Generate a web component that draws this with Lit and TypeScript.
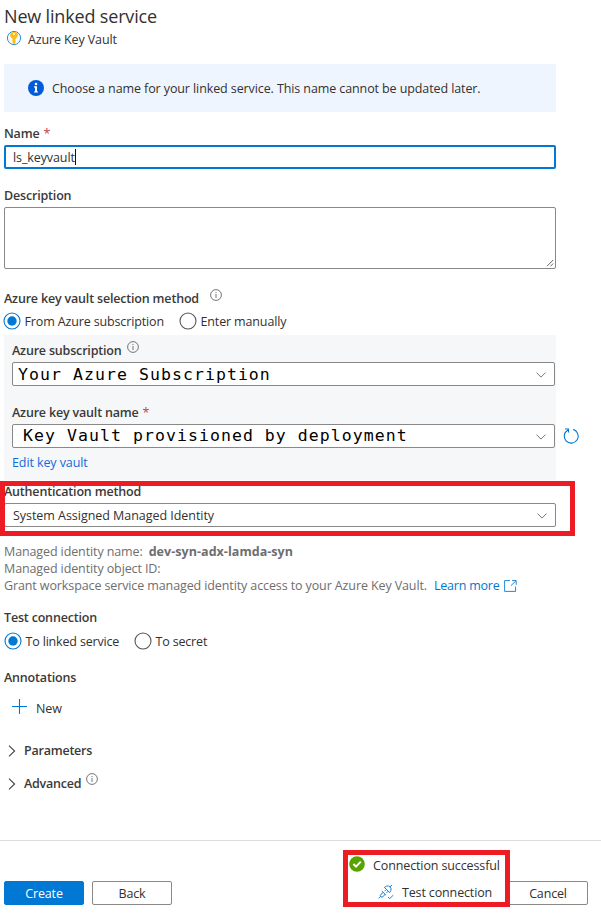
import { LitElement, html, css, svg } from "lit";

const chevronDown = html`<svg class="chev" width="10" height="6" viewBox="0 0 10 6"><path d="M.5 .6 5 5.1 9.5 .6" fill="none" stroke="#777" /></svg>`;
const chevronRight = html`<svg width="8" height="12" viewBox="0 0 8 12"><path d="M1 .6 6.6 6 1 11.4" fill="none" stroke="#444" stroke-width="1.1" /></svg>`;
const info = html`<svg class="info" width="12" height="12" viewBox="0 0 12 12"><circle cx="6" cy="6" r="5.4" fill="none" stroke="#666" stroke-width=".9" /><path d="M6 5v4M6 3v1.1" stroke="#666" stroke-width=".9" /></svg>`;
const radio = (on: boolean) => html`<svg width="18" height="18" viewBox="0 0 18 18">
  <circle cx="9" cy="9" r="8" fill="#fff" stroke=${on ? "#0078d4" : "#555"} stroke-width="1.1" />
  ${on ? svg`<circle cx="9" cy="9" r="4.7" fill="#0078d4" />` : ""}</svg>`;

class AppRoot extends LitElement {
  static styles = css`
    :host { display: block; width: 601px; height: 913px; overflow: hidden; background: #fff; color: #323130;
      font: 400 12.5px/18px "Open Sans", "Noto Sans", sans-serif; letter-spacing: -0.1px; }
    * { box-sizing: border-box; }
    svg { display: block; flex: none; }
    .page { display: flex; flex-direction: column; height: 913px; padding-left: 4px; white-space: nowrap; position: relative; }
    .title { font: 500 18px/26px "Open Sans", sans-serif; letter-spacing: -0.17px; height: 26px; margin-top: 3px; }
    .sub { display: flex; height: 18px; gap: 6px; padding-left: 2px; margin-top: 1px; }
    .sub span { padding-top: 1px; letter-spacing: -0.12px; }
    .banner { display: flex; align-items: center; gap: 8px; width: 552px; height: 48px; margin-top: 16px; padding-left: 24px; background: #eff5ff; }
    .banner span { padding-top: 2px; }
    .label { display: flex; height: 18px; padding-top: 1px; font-weight: 600; letter-spacing: -0.18px; margin-top: 17px; color: #3b3a39; }
    .label .info { margin-top: -1px; }
    .label + div { margin-top: 3px; }
    .req { color: #c4434b; margin-left: 4px; font-weight: 400; }
    .input { display: flex; align-items: center; width: 552px; height: 24px; border: 2px solid #0078d4; border-radius: 2px; padding-left: 7px; }
    .input span:first-child { padding-top: 2px; }
    .caret { width: 1px; height: 16px; background: #111; }
    .area { display: flex; align-items: flex-end; justify-content: flex-end; width: 552px; height: 62px; border: 1px solid #8a8886; border-radius: 2px; padding: 1px; }
    .radios { display: flex; height: 18px; align-items: center; letter-spacing: -0.17px; }
    .radios .txt { height: 18px; padding: 1px 0 0 4px; margin-right: 4px; }
    .radios.vault { margin: 5px 0 0 -1.5px; }
    .radios.vault .txt { width: 154px; letter-spacing: -0.14px; }
    .radios.conn { margin: 6px 0 0 -0.5px; }
    .radios.conn .txt { width: 108px; }
    .panel { display: flex; flex-direction: column; width: 552px; height: 145px; margin-top: 5px; padding: 6px 1px 0 8px; background: #f6f7f9; }
    .panel .label:first-child { margin-top: 0; }
    .select { display: flex; align-items: center; justify-content: space-between; height: 24px; background: #fff; border: 1px solid #8a8886; border-radius: 2px; padding: 0 8px 0 5px; }
    .select.auth { width: 552px; padding-left: 8px; }
    .auth span { padding-top: 2px; letter-spacing: -0.04px; }
    .chev { margin-top: 2px; }
    .mono { font: 16.5px/22px "DejaVu Sans Mono", monospace; letter-spacing: 1.06px; color: #000; }
    .mono.sub1 { padding-top: 2px; }
    .mono.kv { padding-left: 5px; }
    .row { display: flex; width: 568px; gap: 8px; align-items: center; }
    .row .select { width: 543px; flex: none; }
    .link { color: #0f6cdb; }
    .edit { margin-top: 6px; }
    .grey { color: #6e6e6e; height: 17px; line-height: 17px; display: flex; letter-spacing: -0.11px; }
    .grey.first { margin-top: 16px; }
    .grey b { margin-left: 6px; letter-spacing: 0.05px; }
    .grey .link { margin-left: 7px; color: #0078d4; letter-spacing: -0.22px; }
    .grey svg { margin: 3px 0 0 4px; }
    .new { display: flex; gap: 8px; margin: 14px 0 0 8px; height: 18px; }
    .new svg { margin-top: -1px; }
    .exp { display: flex; align-items: center; gap: 8px; height: 18px; padding-left: 4px; font-weight: 600; letter-spacing: -0.22px; color: #3b3a39; }
    .exp .info { margin: -11px 0 0 -3px; }
    .footer { display: flex; width: 601px; height: 73px; margin: auto 0 0 -4px; border-top: 1px solid #dcdcdc; padding: 40px 13px 0 4px; gap: 8px; }
    .btn { width: 80px; height: 24px; border: 1px solid #8a8886; border-radius: 2px; text-align: center; line-height: 23px; letter-spacing: -0.15px; }
    .primary { background: #0078d4; border-color: #0078d4; color: #fff; }
    .cancel { margin-left: auto; }
    .mark { position: absolute; border: 5px solid #ed1c24; }
    .mark-auth { left: 0; top: 481px; width: 575px; height: 55px; }
    .mark-test { left: 343px; top: 850px; width: 167px; height: 57px; background: #fff; }
    .status { display: flex; gap: 8px; height: 18px; margin: 0 0 0 1px; align-items: center; letter-spacing: -0.12px; }
    .status span { padding-top: 3px; }
    .test { display: flex; gap: 8px; height: 18px; margin: 10px 0 0 30px; align-items: center; letter-spacing: -0.14px; }
    .test span { padding-top: 2px; }
  `;

  render() {
    return html`<div class="page">
      <div class="title">New linked service</div>
      <div class="sub">
        <svg width="16" height="16" viewBox="0 0 16 16"><circle cx="8" cy="8" r="6.6" fill="#f4fafd" stroke="#2d8fd0" stroke-width="1" /><path d="M5.2 2.4Q8 1.4 10.8 2.4Q12.9 4.8 11 7.4L9.5 8.8V12.6L8 14.2 6.5 12.6V8.8L5 7.4Q3.1 4.8 5.2 2.4Z" fill="#fdbd13" /><circle cx="8" cy="4.1" r="1" fill="#fff" /></svg>
        <span>Azure Key Vault</span>
      </div>
      <div class="banner">
        <svg width="16" height="16" viewBox="0 0 16 16"><circle cx="8" cy="8" r="8" fill="#015cda" /><circle cx="8" cy="4" r="1.3" fill="#fff" /><path d="M6 6.3H9V11.4H10V12.6H6V11.4H7V7.5H6Z" fill="#fff" /></svg>
        <span>Choose a name for your linked service. This name cannot be updated later.</span>
      </div>

      <div class="label" style="margin-top:12px">Name<span class="req">*</span></div>
      <div class="input"><span>ls_keyvault</span><span class="caret"></span></div>
      <div class="label">Description</div>
      <div class="area"><svg width="8" height="8" viewBox="0 0 8 8"><path d="M1 7.2 7.2 1M4.5 7.2 7.2 4.5" stroke="#555" stroke-width=".9" /></svg></div>

      <div class="label" style="margin-top:20px">Azure key vault selection method<span style="margin-left:11px">${info}</span></div>
      <div class="radios vault" style="margin-top:5px">${radio(true)}<span class="txt">From Azure subscription</span>${radio(false)}<span class="txt">Enter manually</span></div>

      <div class="panel">
        <div class="label">Azure subscription<span style="margin-left:5px">${info}</span></div>
        <div class="select"><span class="mono sub1">Your Azure Subscription</span>${chevronDown}</div>
        <div class="label">Azure key vault name<span class="req">*</span></div>
        <div class="row">
          <div class="select"><span class="mono kv">Key Vault provisioned by deployment</span>${chevronDown}</div>
          <svg width="17" height="18" viewBox="0 0 17 18"><path d="M10.2 2.4A7 7 0 1 1 5 2.9M2 2H5.5V5.6" fill="none" stroke="#0078d4" stroke-width="1.1" /></svg>
        </div>
        <div class="link edit">Edit key vault</div>
      </div>

      <div class="label" style="margin-top:2px">Authentication method</div>
      <div class="select auth"><span>System Assigned Managed Identity</span>${chevronDown}</div>

      <div class="grey first">Managed identity name:<b>dev-syn-adx-lamda-syn</b></div>
      <div class="grey">Managed identity object ID:</div>
      <div class="grey">Grant workspace service managed identity access to your Azure Key Vault.<span class="link">Learn more</span>
        <svg width="13" height="12" viewBox="0 0 13 12"><path d="M6 .6H.6V11.4H11.6V6.5M8 .6H12.2V4.8M12 .8 7 5.6" fill="none" stroke="#2189d8" stroke-width="1" /></svg></div>

      <div class="label" style="margin-top:14px">Test connection</div>
      <div class="radios conn" style="margin-top:6px">${radio(true)}<span class="txt">To linked service</span>${radio(false)}<span class="txt">To secret</span></div>

      <div class="label" style="margin-top:18px">Annotations</div>
      <div class="new" style="margin-top:14px"><svg width="16" height="16" viewBox="0 0 16 16"><path d="M7.5 0V15M0 7.5H15" stroke="#0078d4" stroke-width="1.1" /></svg><span>New</span></div>

      <div class="exp" style="margin-top:24px">${chevronRight}Parameters</div>
      <div class="exp" style="margin-top:15px">${chevronRight}Advanced${info}</div>

      <div class="footer">
        <div class="btn primary">Create</div><div class="btn">Back</div><div class="btn cancel">Cancel</div>
      </div>

      <div class="mark mark-auth"></div>
      <div class="mark mark-test">
        <div class="status"><svg width="16" height="16" viewBox="0 0 16 16"><circle cx="8" cy="8" r="7.8" fill="#57a300" /><path d="M4.4 8 7 10.6 11.8 5.6" fill="none" stroke="#fff" stroke-width="2" /></svg><span>Connection successful</span></div>
        <div class="test"><svg width="16" height="16" viewBox="0 0 16 16"><g fill="none" stroke="#1b83d6" stroke-width="1"><path d="M.6 14.4 2.8 12.2M11.9 3.1 14.1 .9M3.8 7 8 11.2M5.2 8.4 3 10.3Q1.6 11.4 2.8 12.6 4 13.8 5.2 12.6L7 10.2M6.4 3.4 11.6 8.6M6.4 3.4 8.6 2.1Q10.6 1.4 12.3 3.1 13.7 4.7 12.8 6.7L11.6 8.6M6.6 7.2 8.2 5.6M8.4 9 9.8 7.4" /><path d="M10 13 11.7 14.7 15.3 11.1" /></g></svg><span>Test connection</span></div>
      </div>
    </div>`;
  }
}
customElements.define("app-root", AppRoot);
